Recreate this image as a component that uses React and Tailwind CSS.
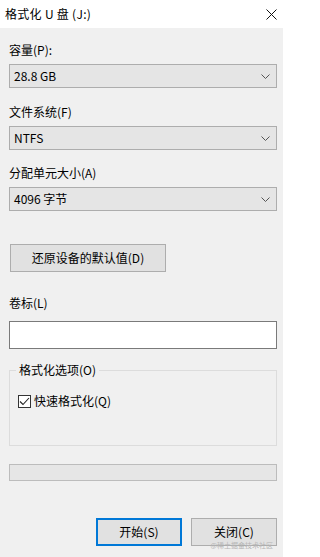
import React from "react";

function Chevron() {
  return (
    <svg width="9" height="5" viewBox="0 0 9 5" className="shrink-0">
      <path d="M0.5 0.5 L4.5 4.5 L8.5 0.5" fill="none" stroke="#555" strokeWidth="1" />
    </svg>
  );
}

function Combo({ value }) {
  return (
    <div className="h-[24px] flex items-center justify-between bg-[#e5e5e5] border border-[#adadad] pl-[4px] pr-[6px]">
      <span>{value}</span>
      <Chevron />
    </div>
  );
}

function Field({ label, value, mt }) {
  return (
    <div className={mt}>
      <div className="h-[16px] leading-[16px]">{label}</div>
      <div className="mt-[6px]">
        <Combo value={value} />
      </div>
    </div>
  );
}

export default function App() {
  return (
    <div
      className="relative w-[283px] h-[557px] bg-[#f0f0f0] text-[12px] text-black overflow-hidden"
      style={{ fontFamily: '"Noto Sans CJK SC", "Noto Sans", sans-serif' }}
    >
      {/* Title bar */}
      <div className="h-[28px] bg-white flex items-center justify-between pl-[5px] pr-[6px]">
        <span className="text-[12px] tracking-[0.3px]">格式化 U 盘 (J:)</span>
        <svg width="11" height="11" viewBox="0 0 11 11">
          <path d="M0.5 0.5 L10.5 10.5 M10.5 0.5 L0.5 10.5" stroke="#111" strokeWidth="1" />
        </svg>
      </div>

      <div className="px-[9px] pr-[6px]">
        <Field label="容量(P):" value="28.8 GB" mt="mt-[14px]" />
        <Field label="文件系统(F)" value="NTFS" mt="mt-[16px]" />
        <Field label="分配单元大小(A)" value="4096 字节" mt="mt-[15px]" />

        <button className="mt-[33px] ml-[1px] w-[156px] h-[28px] bg-[#e1e1e1] border border-[#adadad] flex items-center justify-center">
          还原设备的默认值(D)
        </button>

        <div className="mt-[23px] h-[16px] leading-[16px]">卷标(L)</div>
        <div className="mt-[10px] h-[28px] bg-white border border-[#7a7a7a]"></div>

        {/* Group box */}
        <div className="mt-[21px] relative h-[76px] border border-[#dcdcdc]">
          <span className="absolute -top-[9px] left-[6px] px-[3px] bg-[#f0f0f0] leading-[16px]">
            格式化选项(O)
          </span>
          <div className="mt-[22px] ml-[8px] flex items-center gap-[3px]">
            <div className="w-[13px] h-[13px] border border-[#333] bg-white flex items-center justify-center">
              <svg width="11" height="9" viewBox="0 0 11 9">
                <path d="M1 4.5 L4 7.5 L10 1" fill="none" stroke="#222" strokeWidth="1.1" />
              </svg>
            </div>
            <span className="leading-[16px]">快速格式化(Q)</span>
          </div>
        </div>

        {/* Progress bar */}
        <div className="mt-[18px] h-[17px] bg-[#e6e6e6] border border-[#bcbcbc]"></div>

        {/* Buttons */}
        <div className="mt-[37px] flex justify-end gap-[9px]">
          <button className="w-[86px] h-[28px] bg-[#e1e1e1] border-2 border-[#0078d7] flex items-center justify-center">
            开始(S)
          </button>
          <button className="w-[86px] h-[28px] bg-[#e1e1e1] border border-[#adadad] flex items-center justify-center">
            关闭(C)
          </button>
        </div>
      </div>

      <span className="absolute right-[10px] top-[541px] text-[7px] leading-[8px] text-[#b5b5b5]">
        @稀土掘金技术社区
      </span>
    </div>
  );
}
